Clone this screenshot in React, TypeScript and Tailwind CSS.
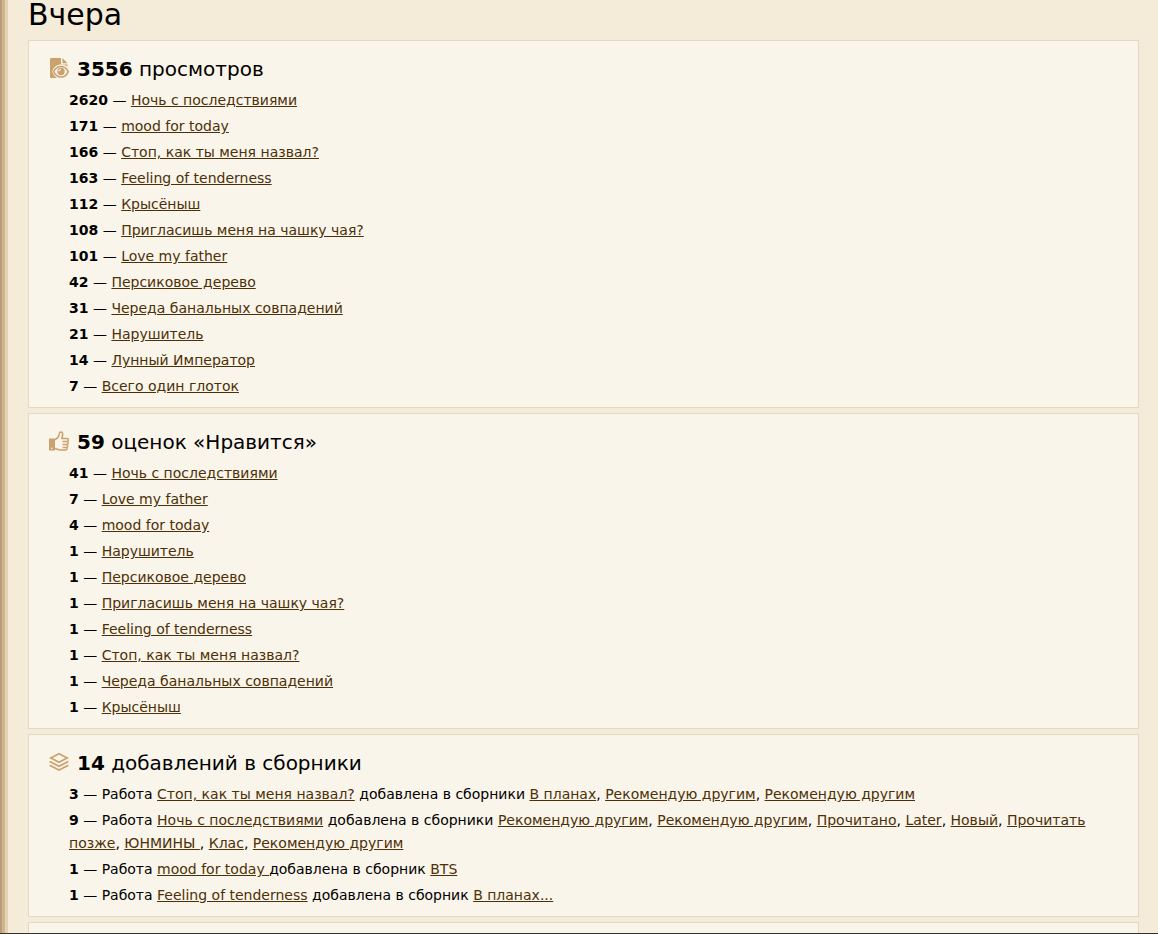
import React from 'react';

type Item = {
  count: number;
  title: string;
};

type CollectionItem = Item & {
  verb: string;
  collections: string[];
};

const views: Item[] = [
  { count: 2620, title: 'Ночь с последствиями' },
  { count: 171, title: 'mood for today' },
  { count: 166, title: 'Стоп, как ты меня назвал?' },
  { count: 163, title: 'Feeling of tenderness' },
  { count: 112, title: 'Крысёныш' },
  { count: 108, title: 'Пригласишь меня на чашку чая?' },
  { count: 101, title: 'Love my father' },
  { count: 42, title: 'Персиковое дерево' },
  { count: 31, title: 'Череда банальных совпадений' },
  { count: 21, title: 'Нарушитель' },
  { count: 14, title: 'Лунный Император' },
  { count: 7, title: 'Всего один глоток' },
];

const likes: Item[] = [
  { count: 41, title: 'Ночь с последствиями' },
  { count: 7, title: 'Love my father' },
  { count: 4, title: 'mood for today' },
  { count: 1, title: 'Нарушитель' },
  { count: 1, title: 'Персиковое дерево' },
  { count: 1, title: 'Пригласишь меня на чашку чая?' },
  { count: 1, title: 'Feeling of tenderness' },
  { count: 1, title: 'Стоп, как ты меня назвал?' },
  { count: 1, title: 'Череда банальных совпадений' },
  { count: 1, title: 'Крысёныш' },
];

const collected: CollectionItem[] = [
  {
    count: 3,
    title: 'Стоп, как ты меня назвал?',
    verb: ' добавлена в сборники ',
    collections: ['В планах', 'Рекомендую другим', 'Рекомендую другим'],
  },
  {
    count: 9,
    title: 'Ночь с последствиями',
    verb: ' добавлена в сборники ',
    collections: [
      'Рекомендую другим',
      'Рекомендую другим',
      'Прочитано',
      'Later',
      'Новый',
      'Прочитать позже',
      'ЮНМИНЫ ',
      'Клас',
      'Рекомендую другим',
    ],
  },
  {
    count: 1,
    title: 'mood for today ',
    verb: 'добавлена в сборник ',
    collections: ['BTS'],
  },
  {
    count: 1,
    title: 'Feeling of tenderness',
    verb: ' добавлена в сборник ',
    collections: ['В планах...'],
  },
];

const ViewsIcon = () => (
  <svg viewBox="0 0 20 20" className="mb-0.5 size-5 shrink-0" aria-hidden="true">
    <path
      fill="#c9a26d"
      d="M2 0h10v5.500a1 1 0 0 0 1 1h5.500v2.300C16.500 7.300 14.400 6.600 12 6.600c-4 0-7 2.200-8.700 6.900.8 2.700 2.300 5 4.700 6.500H2a1 1 0 0 1-1-1V1a1 1 0 0 1 1-1zM13.500 0l5 5.200h-5z"
    />
    <path
      fill="none"
      stroke="#c9a26d"
      strokeWidth="1.500"
      d="M4.600 13.600C6.300 10.200 8.800 8.500 12 8.500s5.700 1.700 7.300 5.100C17.700 17.200 15.200 19 12 19s-5.700-1.800-7.400-5.400z"
    />
    <circle cx="12" cy="13.500" r="3.700" fill="#c9a26d" />
    <path
      fill="none"
      stroke="#faf5ea"
      strokeWidth="1.200"
      d="M10 13.500a2 2 0 0 1 2-2"
    />
  </svg>
);

const LikeIcon = () => (
  <svg viewBox="0 0 20 20" className="mb-0.5 size-5 shrink-0" aria-hidden="true">
    <path fill="#c9a26d" d="M0 7.500h6v12H0z" />
    <circle cx="2.800" cy="17.200" r=".8" fill="#faf5ea" />
    <path
      fill="none"
      stroke="#c9a26d"
      strokeWidth="1.500"
      strokeLinejoin="round"
      d="M6 8.800c2.200-1 3.800-3 4.200-5.600.2-1.600.7-2.300 1.700-2.300 1.300 0 1.900 1.200 1.700 3-.1 1.400-.4 2.500-.9 3.600h5.100c1 0 1.600.6 1.600 1.500s-.6 1.600-1.600 1.600c.9.100 1.300.7 1.300 1.500s-.6 1.500-1.500 1.500c.8.200 1.100.7 1.100 1.400 0 .8-.6 1.400-1.400 1.400.5.200.8.700.8 1.200 0 .8-.6 1.300-1.500 1.300h-5.400c-2 0-3-.9-5.200-1.400M13.500 10.600h4.300M13.500 13.600h4M13.500 16.400h3.500"
    />
  </svg>
);

const CollectionsIcon = () => (
  <svg viewBox="0 0 20 20" className="mb-0.5 size-5 shrink-0" aria-hidden="true">
    <g fill="none" stroke="#c9a26d" strokeWidth="1.700">
      <path d="m10 1.800 8.200 4.200-8.200 4.200L1.800 6z" />
      <path d="m.6 9.500 9.400 4.700 9.400-4.700" />
      <path d="m.6 13.300 9.400 4.700 9.400-4.700" />
    </g>
  </svg>
);

const WorkLink = ({ children }: { children: React.ReactNode }) => (
  <a href="#" className="text-[#4c3008] underline">
    {children}
  </a>
);

type CardProps = {
  icon: React.ReactNode;
  total: number;
  label: string;
  children: React.ReactNode;
};

const Card = ({ icon, total, label, children }: CardProps) => (
  <section className="shrink-0 border border-[#e5d7c3] bg-[#faf5ea] px-5 pt-3.5 pb-1.5">
    <h2 className="mb-1.5 flex items-center gap-2 text-xl leading-7">
      {icon}
      <span>
        <b>{total}</b> {label}
      </span>
    </h2>
    <ul className="pl-5 text-sm leading-[23px]">{children}</ul>
  </section>
);

const WorkRow = ({ count, title }: Item) => (
  <li className="mb-[3px]">
    <b>{count}</b> — <WorkLink>{title}</WorkLink>
  </li>
);

export default function App() {
  return (
    <div className="flex h-screen overflow-hidden border-b border-[#333333] bg-[#f5ebd9] font-['Verdana','DejaVu_Sans',sans-serif] text-black">
      {/* book-edge stripes */}
      <div className="w-0.5 shrink-0 bg-[#b89e78]" />
      <div className="w-[3px] shrink-0 bg-[#d0b68e]" />
      <div className="w-[3px] shrink-0 bg-[#e6d3b3]" />
      <main className="flex min-w-0 grow flex-col gap-[5px] pr-[19px] pl-5">
        <h1 className="shrink-0 pb-[5px] text-3xl leading-[30px]">Вчера</h1>
        <Card icon={<ViewsIcon />} total={3556} label="просмотров">
          {views.map((item) => (
            <WorkRow key={item.title} {...item} />
          ))}
        </Card>
        <Card icon={<LikeIcon />} total={59} label="оценок «Нравится»">
          {likes.map((item) => (
            <WorkRow key={item.title} {...item} />
          ))}
        </Card>
        <Card icon={<CollectionsIcon />} total={14} label="добавлений в сборники">
          {collected.map((item) => (
            <li key={item.title} className="mb-[3px]">
              <b>{item.count}</b> — Работа <WorkLink>{item.title}</WorkLink>
              {item.verb}
              {item.collections.map((name, i) => (
                <React.Fragment key={i}>
                  {i > 0 && ', '}
                  <WorkLink>{name}</WorkLink>
                </React.Fragment>
              ))}
            </li>
          ))}
        </Card>
        <section className="grow border border-b-0 border-[#e5d7c3] bg-[#faf5ea]" />
      </main>
    </div>
  );
}
